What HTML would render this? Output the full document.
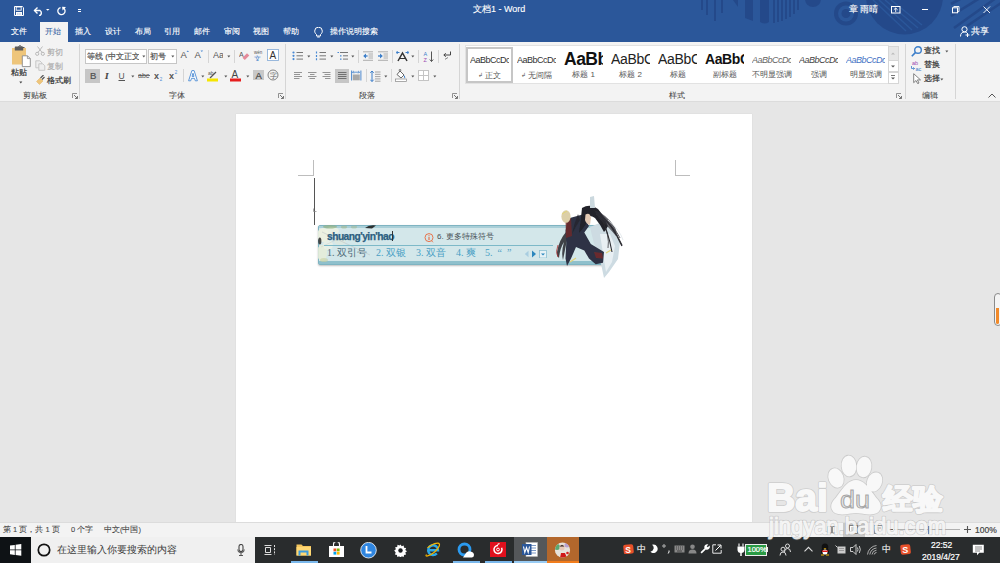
<!DOCTYPE html>
<html><head><meta charset="utf-8">
<style>
*{margin:0;padding:0;box-sizing:border-box}
html,body{width:1000px;height:563px;overflow:hidden;background:#e6e6e6;font-family:"Liberation Sans",sans-serif;position:relative}
.a{position:absolute;white-space:nowrap}
#title{left:0;top:0;width:1000px;height:42px;background:#2b579a;overflow:hidden}
#ribbon{left:0;top:42px;width:1000px;height:59px;background:#f3f3f3}
#rline{left:0;top:101px;width:1000px;height:1px;background:#dcdcdc}
#page{left:236px;top:113.5px;width:516px;height:408.5px;background:#fff;box-shadow:0 0 1px #c8c8c8}
#status{left:0;top:522px;width:1000px;height:15px;background:#f3f3f3;border-top:1px solid #dcdcdc}
#taskbar{left:0;top:537px;width:1000px;height:26px;background:#292c2d}
.tw{color:#fff;font-size:9px;-webkit-text-stroke:0.12px #fff}
.rb{color:#444;font-size:8px}
.sep{width:1px;background:#d6d6d6}
</style></head><body>
<div id="title" class="a">
<svg class="a" style="left:0;top:0" width="1000" height="42">
 <g fill="#24498a">
  <rect x="701" y="0" width="2" height="10"/><rect x="706" y="0" width="2" height="15"/><rect x="714" y="0" width="2" height="21"/><rect x="721" y="0" width="2" height="13"/>
  <polygon points="733,0 738,0 738,7"/>
  <polygon points="745,0 753,0 753,21 745,18"/>
  <path d="M760 0h9v22q-4.5 3 -9 0z"/>
  <rect x="773" y="0" width="2" height="23"/><rect x="777" y="0" width="2" height="22"/><rect x="781" y="0" width="2" height="21"/><rect x="785" y="0" width="2" height="19"/><rect x="789" y="0" width="2" height="17"/><rect x="793" y="0" width="2" height="14"/><rect x="797" y="0" width="2" height="10"/>
  <circle cx="813" cy="-1" r="8"/>
  <circle cx="846" cy="13.5" r="12"/>
 </g>
 <circle cx="846" cy="13.5" r="8" fill="#2b579a"/>
 <circle cx="846" cy="13.5" r="4.5" fill="#24498a"/>
 <path d="M866 -4 A38 38 0 0 0 943 -4 Z" fill="#24498a"/>
 <g stroke="#2b579a" stroke-width="1.4">
  <line x1="873" y1="0" x2="906" y2="31"/><line x1="879" y1="0" x2="912" y2="30"/><line x1="885" y1="0" x2="918" y2="28"/><line x1="891" y1="0" x2="922" y2="25"/>
 </g>
 <g stroke="#24498a" stroke-width="2.6">
  <line x1="951" y1="4" x2="962" y2="-2"/><line x1="951" y1="16" x2="980" y2="-2"/><line x1="954" y1="28" x2="996" y2="-2"/><line x1="967" y1="26" x2="1004" y2="1"/>
 </g>
</svg>
<svg class="a" style="left:14px;top:6px" width="10" height="10" viewBox="0 0 10 10"><path d="M0.5 0.5h7.8l1.2 1.2v7.8h-9z" fill="none" stroke="#fff" stroke-width="1"/><rect x="2.2" y="1" width="5" height="3.2" fill="none" stroke="#fff" stroke-width="0.9"/><rect x="2" y="6" width="6" height="3.5" fill="#fff"/><path d="M3.5 8h0.8M5.6 8h0.8" stroke="#2b579a" stroke-width="0.9"/></svg>
<svg class="a" style="left:33px;top:6px" width="11" height="10" viewBox="0 0 11 10"><path d="M1.5 4.5h5.5a3 3 0 0 1 0 5h-1" fill="none" stroke="#fff" stroke-width="1.4"/><path d="M4.5 1.5l-3 3l3 3" fill="none" stroke="#fff" stroke-width="1.4"/></svg>
<svg class="a" style="left:46px;top:9px" width="4" height="2"><path d="M0 0h3.5l-1.75 1.8z" fill="#fff"/></svg>
<svg class="a" style="left:57px;top:6px" width="10" height="10" viewBox="0 0 10 10"><path d="M3.57 1.52A3.6 3.6 0 1 0 6.6 2.1" fill="none" stroke="#fff" stroke-width="1.3"/><path d="M5.1 0.7L9 0.9L5.6 4.4z" fill="#fff"/></svg>
<div class="a" style="left:78px;top:9px;width:3px;height:1px;background:#fff"></div><div class="a" style="left:78px;top:11px;width:3px;height:1px;background:#fff"></div>
<div class="a tw" style="left:473px;top:4px;font-size:9px;line-height:11px">文档1 - Word</div>
<div class="a tw" style="left:849px;top:4px;font-size:8.5px;line-height:11px">章 雨晴</div>
<svg class="a" style="left:891px;top:6px" width="10" height="8"><rect x="0.5" y="0.5" width="8.5" height="6.5" fill="none" stroke="#fff"/><path d="M4.7 2v4M2.8 3.8l1.9-1.8 1.9 1.8" stroke="#fff" fill="none" stroke-width="0.9"/></svg>
<div class="a" style="left:922px;top:9px;width:6px;height:1px;background:#fff"></div>
<svg class="a" style="left:952px;top:6px" width="8" height="8"><rect x="0.5" y="1.8" width="5" height="5" fill="none" stroke="#fff"/><path d="M1.8 1.5v-1h5.2v5.2h-1" fill="none" stroke="#fff" stroke-width="0.9"/></svg>
<svg class="a" style="left:983px;top:6px" width="8" height="8"><path d="M0.5 0.5l6.5 6.5M7 0.5l-6.5 6.5" stroke="#fff" stroke-width="0.9"/></svg>
<div class="a" style="left:40px;top:22px;width:28px;height:20px;background:#f3f3f3"></div>
<div class="a tw" style="left:11px;top:26px;font-size:8px;line-height:11px">文件</div>
<div class="a" style="left:45px;top:26px;font-size:8px;line-height:11px;color:#2b579a">开始</div>
<div class="a tw" style="left:75px;top:26px;font-size:8px;line-height:11px">插入</div>
<div class="a tw" style="left:105px;top:26px;font-size:8px;line-height:11px">设计</div>
<div class="a tw" style="left:135px;top:26px;font-size:8px;line-height:11px">布局</div>
<div class="a tw" style="left:164px;top:26px;font-size:8px;line-height:11px">引用</div>
<div class="a tw" style="left:194px;top:26px;font-size:8px;line-height:11px">邮件</div>
<div class="a tw" style="left:224px;top:26px;font-size:8px;line-height:11px">审阅</div>
<div class="a tw" style="left:253px;top:26px;font-size:8px;line-height:11px">视图</div>
<div class="a tw" style="left:283px;top:26px;font-size:8px;line-height:11px">帮助</div>
<svg class="a" style="left:314px;top:27px" width="9" height="11" viewBox="0 0 9 11"><path d="M2.5 7.5C1 6.3 0.7 5 0.7 4A3.8 3.8 0 0 1 8.3 4C8.3 5 8 6.3 6.5 7.5V9h-4z" fill="none" stroke="#fff" stroke-width="1"/><path d="M3.2 10h2.6" stroke="#fff"/></svg>
<div class="a tw" style="left:330px;top:26px;font-size:8px;line-height:11px">操作说明搜索</div>
<svg class="a" style="left:960px;top:26px" width="10" height="11" viewBox="0 0 10 11"><circle cx="4.5" cy="3.3" r="2.6" fill="none" stroke="#fff"/><path d="M0.5 10.5c0-3 1.5-4.5 4-4.5 1 0 1.8 0.2 2.3 0.6" fill="none" stroke="#fff"/><path d="M7.5 7v4M5.5 9h4" stroke="#fff"/></svg>
<div class="a tw" style="left:971px;top:26px;font-size:8.5px;line-height:11px">共享</div>
</div>
<div id="ribbon" class="a"></div>
<div id="rline" class="a"></div>
<!--RIB--><svg class="a" style="left:11px;top:45px" width="21" height="23" viewBox="0 0 21 23"><path d="M4.5 3.5h9" stroke="#555" stroke-width="3"/><circle cx="9" cy="2" r="1.3" fill="none" stroke="#555" stroke-width="1"/><rect x="1" y="3" width="14" height="16.5" fill="#eec57a"/><rect x="3.8" y="1.5" width="8.4" height="4" rx="0.5" fill="#5a5a5a"/><path d="M11.3 10.8h5.2l2.8 2.8v8h-8z" fill="#fff" stroke="#8a8a8a" stroke-width="0.9"/><path d="M16.4 10.8v2.8h2.8" fill="none" stroke="#8a8a8a" stroke-width="0.8"/></svg>
<div class="a" style="left:11px;top:67.5px;font-size:8px;line-height:10px;color:#333;-webkit-text-stroke:0.2px #333;">粘贴</div>
<svg class="a" style="left:19px;top:81px" width="4" height="3" viewBox="0 0 4 3"><path d="M0.3 0.6h3l-1.5 1.8z" fill="#444"/></svg>
<svg class="a" style="left:35px;top:46px" width="10" height="10" viewBox="0 0 10 10"><path d="M2.5 0.5l5 6.5M7.5 0.5l-5 6.5" stroke="#b3b3b3" stroke-width="0.9" fill="none"/><circle cx="2.2" cy="7.8" r="1.6" fill="none" stroke="#b3b3b3" stroke-width="0.9"/><circle cx="7.8" cy="7.8" r="1.6" fill="none" stroke="#b3b3b3" stroke-width="0.9"/></svg>
<div class="a" style="left:47px;top:47.5px;font-size:8px;line-height:10px;color:#b0b0b0;-webkit-text-stroke:0.2px #b0b0b0;">剪切</div>
<svg class="a" style="left:35px;top:60px" width="11" height="11" viewBox="0 0 11 11"><path d="M0.8 0.8h4l2 2v5h-6z" fill="#eee" stroke="#c4c4c4" stroke-width="0.9"/><path d="M3.8 3.8h4l2 2v4.5h-6z" fill="#eee" stroke="#c4c4c4" stroke-width="0.9"/></svg>
<div class="a" style="left:47px;top:61.5px;font-size:8px;line-height:10px;color:#b0b0b0;-webkit-text-stroke:0.2px #b0b0b0;">复制</div>
<svg class="a" style="left:36px;top:75px" width="9" height="10" viewBox="0 0 9 10"><path d="M0.5 6.5l3.5 -3.5 3 3-3.5 3.5z" fill="#eec57a" stroke="#e0b060" stroke-width="0.5"/><path d="M4.5 3l3-3M6 4.5l2.5-2.5" stroke="#555" stroke-width="1.2"/></svg>
<div class="a" style="left:47px;top:76px;font-size:8px;line-height:10px;color:#333;-webkit-text-stroke:0.2px #333;">格式刷</div>
<div class="a" style="left:23px;top:91px;font-size:8px;line-height:10px;color:#444;-webkit-text-stroke:0.2px #444;-webkit-text-stroke:0.05px #444">剪贴板</div>
<svg class="a" style="left:72px;top:93px" width="6" height="6" viewBox="0 0 6 6"><path d="M0.5 5V0.5H5" fill="none" stroke="#777" stroke-width="0.8"/><path d="M2 2l3.3 3.3M5.5 3v2.5H3" fill="none" stroke="#666" stroke-width="0.9"/></svg>
<div class="a" style="left:79px;top:44px;width:1px;height:55px;background:#d5d5d5;"></div>
<div class="a" style="left:85px;top:49px;width:62px;height:14.5px;background:#fff;border:1px solid #c6c6c6"></div>
<div class="a" style="left:87px;top:51.5px;font-size:8px;line-height:10px;color:#555;-webkit-text-stroke:0.2px #555;width:52px;overflow:hidden">等线 (中文正文</div>
<svg class="a" style="left:142px;top:55px" width="4" height="3" viewBox="0 0 4 3"><path d="M0.3 0.6h3l-1.5 1.8z" fill="#555"/></svg>
<div class="a" style="left:148px;top:49px;width:28.5px;height:14.5px;background:#fff;border:1px solid #c6c6c6"></div>
<div class="a" style="left:150px;top:51.5px;font-size:8px;line-height:10px;color:#555;-webkit-text-stroke:0.2px #555;">初号</div>
<svg class="a" style="left:171px;top:55px" width="4" height="3" viewBox="0 0 4 3"><path d="M0.3 0.6h3l-1.5 1.8z" fill="#555"/></svg>
<svg class="a" style="left:180px;top:49px" width="9" height="10" viewBox="0 0 9 10"><text x="0.5" y="9" font-size="9.5" font-family="Liberation Sans" fill="#555">A</text><path d="M6.5 3l1.3-1.6 1.3 1.6z" fill="#4a8ad4"/></svg>
<svg class="a" style="left:194px;top:49px" width="10" height="10" viewBox="0 0 10 10"><text x="0.5" y="9" font-size="9.5" font-family="Liberation Sans" fill="#555">A</text><path d="M6.5 1.5h2.6l-1.3 1.6z" fill="#4a8ad4"/></svg>
<div class="a" style="left:208px;top:50px;width:1px;height:13px;background:#d5d5d5;"></div>
<svg class="a" style="left:213px;top:50px" width="10" height="9" viewBox="0 0 10 9"><text x="0" y="8" font-size="9" font-family="Liberation Sans" fill="#555">Aa</text></svg>
<svg class="a" style="left:227px;top:55px" width="4" height="3" viewBox="0 0 4 3"><path d="M0.3 0.6h3l-1.5 1.8z" fill="#555"/></svg>
<div class="a" style="left:234px;top:50px;width:1px;height:13px;background:#d5d5d5;"></div>
<svg class="a" style="left:239px;top:50px" width="11" height="11" viewBox="0 0 11 11"><text x="0" y="7" font-size="7" font-family="Liberation Sans" fill="#555">A</text><path d="M3.5 7.8l4.5-4.5 2.3 2.3-4.5 4.5z" fill="#e58a9a"/></svg>
<svg class="a" style="left:253px;top:50px" width="11" height="11" viewBox="0 0 11 11"><text x="1" y="4" font-size="4.5" font-family="Liberation Sans" fill="#555">wén</text><text x="1.2" y="10.5" font-size="7" fill="#3c7ec9">文</text></svg>
<svg class="a" style="left:267px;top:49px" width="12" height="12" viewBox="0 0 12 12"><rect x="0.5" y="0.5" width="11" height="11" fill="#fff" stroke="#8fb1d9" stroke-width="0.9"/><text x="2.4" y="9.8" font-size="10" font-family="Liberation Sans" fill="#333">A</text></svg>
<div class="a" style="left:85px;top:69px;width:15px;height:14px;background:#c6c6c6;"></div>
<div class="a" style="left:90px;top:70.5px;font-size:9.5px;line-height:10px;color:#505050;-webkit-text-stroke:0.2px #505050;font-family:'Liberation Sans'">B</div>
<div class="a" style="left:105px;top:71px;font-size:9px;line-height:10px;color:#444;-webkit-text-stroke:0.2px #444;font-family:'Liberation Serif'"><i><b>I</b></i></div>
<svg class="a" style="left:118px;top:70px" width="8" height="12" viewBox="0 0 8 12"><text x="0.5" y="8.5" font-size="8.5" font-family="Liberation Sans" fill="#555">U</text><path d="M0.5 10.5h6.5" stroke="#555"/></svg>
<svg class="a" style="left:131px;top:75px" width="4" height="3" viewBox="0 0 4 3"><path d="M0.3 0.6h3l-1.5 1.8z" fill="#555"/></svg>
<svg class="a" style="left:138px;top:71px" width="13" height="9" viewBox="0 0 13 9"><text x="0" y="7" font-size="7" font-family="Liberation Sans" fill="#555">abc</text><path d="M0 4.5h12" stroke="#555" stroke-width="0.8"/></svg>
<svg class="a" style="left:154px;top:70px" width="10" height="12" viewBox="0 0 10 12"><text x="0" y="9" font-size="9" font-family="Liberation Sans" font-weight="bold" fill="#555">x</text><text x="5.8" y="11" font-size="4.5" font-family="Liberation Sans" fill="#4a8ad4">2</text></svg>
<svg class="a" style="left:169px;top:69px" width="10" height="12" viewBox="0 0 10 12"><text x="0" y="10" font-size="9" font-family="Liberation Sans" font-weight="bold" fill="#555">x</text><text x="5.8" y="4.5" font-size="4.5" font-family="Liberation Sans" fill="#4a8ad4">2</text></svg>
<div class="a" style="left:183px;top:69px;width:1px;height:13px;background:#d5d5d5;"></div>
<svg class="a" style="left:188px;top:70px" width="10" height="12" viewBox="0 0 10 12"><path d="M0.6 10.8L3.9 0.6h2.2l3.3 10.2H7.3L6.5 8.3h-3L2.7 10.8zM4 6.4h2L5 3.2z" fill="#fff" fill-rule="evenodd" stroke="#4a8ad4" stroke-width="0.9" stroke-linejoin="round"/></svg>
<svg class="a" style="left:201px;top:75px" width="4" height="3" viewBox="0 0 4 3"><path d="M0.3 0.6h3l-1.5 1.8z" fill="#555"/></svg>
<svg class="a" style="left:207px;top:69px" width="12" height="13" viewBox="0 0 12 13"><text x="1" y="5.5" font-size="5" font-family="Liberation Sans" fill="#555">ab</text><path d="M3 9l6-6" stroke="#555" stroke-width="1.3"/><rect x="0" y="9.5" width="11" height="3" fill="#f5e500"/></svg>
<svg class="a" style="left:224px;top:75px" width="4" height="3" viewBox="0 0 4 3"><path d="M0.3 0.6h3l-1.5 1.8z" fill="#555"/></svg>
<svg class="a" style="left:230px;top:69px" width="12" height="13" viewBox="0 0 12 13"><text x="1.5" y="8.5" font-size="10" font-family="Liberation Sans" fill="#444">A</text><rect x="0" y="9.5" width="11" height="3" fill="#e61e1e"/></svg>
<svg class="a" style="left:246px;top:75px" width="4" height="3" viewBox="0 0 4 3"><path d="M0.3 0.6h3l-1.5 1.8z" fill="#555"/></svg>
<div class="a" style="left:253px;top:70px;width:11px;height:10px;background:#c8c8c8;"></div>
<div class="a" style="left:255.5px;top:71px;font-size:9.5px;line-height:10px;color:#444;-webkit-text-stroke:0.2px #444;font-family:'Liberation Sans'">A</div>
<svg class="a" style="left:267px;top:69px" width="12" height="12" viewBox="0 0 12 12"><circle cx="6" cy="6" r="5" fill="none" stroke="#777" stroke-width="0.9"/><text x="2.5" y="9.3" font-size="7" fill="#666">字</text></svg>
<div class="a" style="left:169px;top:91px;font-size:8px;line-height:10px;color:#444;-webkit-text-stroke:0.2px #444;-webkit-text-stroke:0.05px #444">字体</div>
<svg class="a" style="left:278px;top:93px" width="6" height="6" viewBox="0 0 6 6"><path d="M0.5 5V0.5H5" fill="none" stroke="#777" stroke-width="0.8"/><path d="M2 2l3.3 3.3M5.5 3v2.5H3" fill="none" stroke="#666" stroke-width="0.9"/></svg>
<div class="a" style="left:285px;top:44px;width:1px;height:55px;background:#d5d5d5;"></div>
<svg class="a" style="left:292px;top:51px" width="12" height="10" viewBox="0 0 12 10"><circle cx="1.5" cy="1.5" r="1.1" fill="#4a8ad4"/><circle cx="1.5" cy="4.8" r="1.1" fill="#4a8ad4"/><circle cx="1.5" cy="8.1" r="1.1" fill="#4a8ad4"/><path d="M4.5 1.5h6.5M4.5 4.8h6.5M4.5 8.1h6.5" stroke="#777"/></svg>
<svg class="a" style="left:307px;top:55px" width="4" height="3" viewBox="0 0 4 3"><path d="M0.3 0.6h3l-1.5 1.8z" fill="#555"/></svg>
<svg class="a" style="left:315px;top:51px" width="12" height="10" viewBox="0 0 12 10"><path d="M1.5 0.5v2M1.5 4v2M1.5 7.3v2" stroke="#4a8ad4" stroke-width="1.2"/><path d="M4.5 1.5h6.5M4.5 4.8h6.5M4.5 8.1h6.5" stroke="#777"/></svg>
<svg class="a" style="left:330px;top:55px" width="4" height="3" viewBox="0 0 4 3"><path d="M0.3 0.6h3l-1.5 1.8z" fill="#555"/></svg>
<svg class="a" style="left:337px;top:51px" width="12" height="11" viewBox="0 0 12 11"><path d="M0.5 1.5h1.5M3 4.8h1.5M3 8.1h1.5" stroke="#4a8ad4" stroke-width="1.2"/><path d="M3 1.5h8M6 4.8h5M6 8.1h5" stroke="#777"/></svg>
<svg class="a" style="left:351px;top:55px" width="4" height="3" viewBox="0 0 4 3"><path d="M0.3 0.6h3l-1.5 1.8z" fill="#555"/></svg>
<div class="a" style="left:358px;top:50px;width:1px;height:13px;background:#d5d5d5;"></div>
<svg class="a" style="left:363px;top:51px" width="11" height="11" viewBox="0 0 11 11"><path d="M0 0.8h10M5.5 3h4.5M5.5 5h4.5M5.5 7h4.5M0 9.3h10" stroke="#9a9a9a" stroke-width="0.8"/><path d="M4.6 5h-3.6" stroke="#3c7ec9" stroke-width="1.3"/><path d="M3 2.5L0.2 5 3 7.5z" fill="#3c7ec9"/></svg>
<svg class="a" style="left:378px;top:51px" width="11" height="11" viewBox="0 0 11 11"><path d="M0 0.8h10M5.5 3h4.5M5.5 5h4.5M5.5 7h4.5M0 9.3h10" stroke="#9a9a9a" stroke-width="0.8"/><path d="M0 5h3.6" stroke="#3c7ec9" stroke-width="1.3"/><path d="M2 2.5L4.8 5 2 7.5z" fill="#3c7ec9"/></svg>
<div class="a" style="left:392px;top:50px;width:1px;height:13px;background:#d5d5d5;"></div>
<svg class="a" style="left:396px;top:50px" width="13" height="12" viewBox="0 0 13 12"><path d="M2 11L6.5 3 11 11" stroke="#333" stroke-width="1.5" fill="none"/><path d="M3.5 8.5h6" stroke="#333"/><path d="M0.5 2.5h3M1.5 1l-1 1.5 1 1.5M12.5 2.5h-3M11.5 1l1 1.5-1 1.5" stroke="#3c7ec9" stroke-width="1" fill="none"/></svg>
<svg class="a" style="left:411px;top:55px" width="4" height="3" viewBox="0 0 4 3"><path d="M0.3 0.6h3l-1.5 1.8z" fill="#555"/></svg>
<div class="a" style="left:418px;top:50px;width:1px;height:13px;background:#d5d5d5;"></div>
<svg class="a" style="left:423px;top:51px" width="12" height="12" viewBox="0 0 12 12"><text x="0.5" y="5" font-size="5.5" font-family="Liberation Sans" fill="#3c7ec9">A</text><text x="0.5" y="10.5" font-size="5.5" font-family="Liberation Sans" fill="#9b4bb0">Z</text><path d="M8.5 0.5v10M6.8 8.5l1.7 2 1.7-2" stroke="#555" fill="none"/></svg>
<div class="a" style="left:438px;top:50px;width:1px;height:13px;background:#d5d5d5;"></div>
<svg class="a" style="left:442px;top:51px" width="10" height="9" viewBox="0 0 10 9"><path d="M8.5 0.5v3.5h-6.5M3.8 2.3L1.8 4 3.8 5.7" stroke="#444" stroke-width="1" fill="none"/><path d="M6 6.5l-3 1.8" stroke="#666" stroke-width="0.8"/></svg>
<svg class="a" style="left:294px;top:72px" width="10" height="8" viewBox="0 0 10 8"><path d="M0 0.5h8M0 2.5h6M0 4.5h8M0 6.5h5.5" stroke="#8a8a8a" stroke-width="0.9"/></svg>
<svg class="a" style="left:308px;top:72px" width="10" height="8" viewBox="0 0 10 8"><path d="M0 0.5h8.5M2 2.5h4.5M0 4.5h8.5M1.5 6.5h5.5" stroke="#8a8a8a" stroke-width="0.9"/></svg>
<svg class="a" style="left:322px;top:72px" width="10" height="8" viewBox="0 0 10 8"><path d="M0.5 0.5h8M2.5 2.5h6M0.5 4.5h8M3 6.5h5.5" stroke="#8a8a8a" stroke-width="0.9"/></svg>
<div class="a" style="left:334.5px;top:69px;width:14.5px;height:14px;background:#c6c6c6;"></div>
<svg class="a" style="left:337.5px;top:71.5px" width="10" height="8" viewBox="0 0 10 8"><path d="M0 0.5h8.5M0 2.5h8.5M0 4.5h8.5M0 6.5h8.5" stroke="#666" stroke-width="0.9"/></svg>
<svg class="a" style="left:351px;top:70px" width="11" height="11" viewBox="0 0 11 11"><path d="M0.6 0.5v10M9.9 0.5v10" stroke="#3c7ec9" stroke-width="0.9"/><path d="M1.5 2.2h7M2.8 1l-1.2 1.2 1.2 1.2M7.2 1l1.2 1.2-1.2 1.2" stroke="#3c7ec9" fill="none" stroke-width="0.8"/><rect x="1.8" y="4.5" width="7" height="5.8" fill="#a8a8a8"/></svg>
<div class="a" style="left:366px;top:69px;width:1px;height:13px;background:#d5d5d5;"></div>
<svg class="a" style="left:370px;top:70px" width="12" height="13" viewBox="0 0 12 13"><path d="M2 1v10.5M0.3 2.8L2 1l1.7 1.8M0.3 9.7L2 11.5l1.7-1.8" stroke="#3c7ec9" fill="none" stroke-width="1"/><path d="M5 2h5.5M5 4.3h5.5M5 6.6h5.5M5 8.9h5.5M5 11.2h5.5" stroke="#9a9a9a" stroke-width="0.9"/></svg>
<svg class="a" style="left:384px;top:75px" width="4" height="3" viewBox="0 0 4 3"><path d="M0.3 0.6h3l-1.5 1.8z" fill="#555"/></svg>
<div class="a" style="left:391px;top:69px;width:1px;height:13px;background:#d5d5d5;"></div>
<svg class="a" style="left:395px;top:69px" width="12" height="13" viewBox="0 0 12 13"><path d="M2 5.5l3-3.5 4 4-3 3z" fill="#fff" stroke="#555" stroke-width="0.9"/><circle cx="5" cy="1.2" r="0.9" fill="none" stroke="#555" stroke-width="0.7"/><path d="M9 6.5q1.5 2 0.3 2.7" stroke="#3c7ec9" fill="none"/><rect x="0.5" y="10" width="11" height="2.5" fill="#fff" stroke="#888" stroke-width="0.7"/></svg>
<svg class="a" style="left:411px;top:75px" width="4" height="3" viewBox="0 0 4 3"><path d="M0.3 0.6h3l-1.5 1.8z" fill="#555"/></svg>
<svg class="a" style="left:418px;top:70px" width="11" height="11" viewBox="0 0 11 11"><rect x="0.5" y="0.5" width="10" height="10" fill="#fff" stroke="#c4c4c4"/><path d="M5.5 0.5v10M0.5 5.5h10" stroke="#c4c4c4"/></svg>
<svg class="a" style="left:433px;top:75px" width="4" height="3" viewBox="0 0 4 3"><path d="M0.3 0.6h3l-1.5 1.8z" fill="#555"/></svg>
<div class="a" style="left:359px;top:91px;font-size:8px;line-height:10px;color:#444;-webkit-text-stroke:0.2px #444;-webkit-text-stroke:0.05px #444">段落</div>
<svg class="a" style="left:452px;top:93px" width="6" height="6" viewBox="0 0 6 6"><path d="M0.5 5V0.5H5" fill="none" stroke="#777" stroke-width="0.8"/><path d="M2 2l3.3 3.3M5.5 3v2.5H3" fill="none" stroke="#666" stroke-width="0.9"/></svg>
<div class="a" style="left:459px;top:44px;width:1px;height:55px;background:#d5d5d5;"></div>
<div class="a" style="left:465px;top:45px;width:424px;height:39px;background:#fff;border:1px solid #e2e2e2"></div>
<div class="a" style="left:466px;top:47px;width:46.5px;height:36px;background:transparent;border:2.5px solid #c6c6c6"></div>
<div class="a" style="left:470px;top:50px;width:39px;height:20px;overflow:hidden"><div style="line-height:20px;font-family:'Liberation Sans';font-size:9px;color:#333;letter-spacing:-0.5px">AaBbCcDc</div></div>
<div class="a" style="left:466px;top:70px;width:47px;text-align:center;font-size:8px;line-height:10px;color:#555"><span style="font-size:6px;vertical-align:1px">↲ </span>正文</div>
<div class="a" style="left:517px;top:50px;width:39px;height:20px;overflow:hidden"><div style="line-height:20px;font-family:'Liberation Sans';font-size:9px;color:#333;letter-spacing:-0.5px">AaBbCcDc</div></div>
<div class="a" style="left:513px;top:70px;width:47px;text-align:center;font-size:8px;line-height:10px;color:#555"><span style="font-size:6px;vertical-align:1px">↲ </span>无间隔</div>
<div class="a" style="left:564px;top:49px;width:39px;height:20px;overflow:hidden"><div style="line-height:20px;font-family:'Liberation Sans';font-size:17.5px;color:#111;font-weight:bold;letter-spacing:-0.5px">AaBbC</div></div>
<div class="a" style="left:560px;top:70px;width:47px;text-align:center;font-size:8px;line-height:10px;color:#555">标题 1</div>
<div class="a" style="left:611px;top:49px;width:39px;height:20px;overflow:hidden"><div style="line-height:20px;font-family:'Liberation Sans';font-size:14px;color:#222;letter-spacing:-0.3px">AaBbCc</div></div>
<div class="a" style="left:607px;top:70px;width:47px;text-align:center;font-size:8px;line-height:10px;color:#555">标题 2</div>
<div class="a" style="left:658px;top:49px;width:39px;height:20px;overflow:hidden"><div style="line-height:20px;font-family:'Liberation Sans';font-size:14px;color:#222;letter-spacing:-0.3px">AaBbCc</div></div>
<div class="a" style="left:654px;top:70px;width:47px;text-align:center;font-size:8px;line-height:10px;color:#555">标题</div>
<div class="a" style="left:705px;top:49px;width:39px;height:20px;overflow:hidden"><div style="line-height:20px;font-family:'Liberation Sans';font-size:14px;color:#111;font-weight:bold;letter-spacing:-0.4px">AaBbCc</div></div>
<div class="a" style="left:701px;top:70px;width:47px;text-align:center;font-size:8px;line-height:10px;color:#555">副标题</div>
<div class="a" style="left:752px;top:50px;width:39px;height:20px;overflow:hidden"><div style="line-height:20px;font-family:'Liberation Sans';font-size:9px;color:#666;font-style:italic;letter-spacing:-0.5px">AaBbCcDc</div></div>
<div class="a" style="left:748px;top:70px;width:47px;text-align:center;font-size:8px;line-height:10px;color:#555">不明显强调</div>
<div class="a" style="left:799px;top:50px;width:39px;height:20px;overflow:hidden"><div style="line-height:20px;font-family:'Liberation Sans';font-size:9px;color:#444;font-style:italic;letter-spacing:-0.5px">AaBbCcDc</div></div>
<div class="a" style="left:795px;top:70px;width:47px;text-align:center;font-size:8px;line-height:10px;color:#555">强调</div>
<div class="a" style="left:846px;top:50px;width:39px;height:20px;overflow:hidden"><div style="line-height:20px;font-family:'Liberation Sans';font-size:9px;color:#4472c4;font-style:italic;letter-spacing:-0.5px">AaBbCcDc</div></div>
<div class="a" style="left:842px;top:70px;width:47px;text-align:center;font-size:8px;line-height:10px;color:#555">明显强调</div>
<div class="a" style="left:888px;top:45.5px;width:10.5px;height:15px;background:#e6e6e6;border:1px solid #d6d6d6"></div>
<div class="a" style="left:888px;top:60px;width:10.5px;height:12px;background:#fff;border:1px solid #d6d6d6"></div>
<div class="a" style="left:888px;top:71.5px;width:10.5px;height:12.5px;background:#fff;border:1px solid #d6d6d6"></div>
<svg class="a" style="left:891px;top:52px" width="5" height="3" viewBox="0 0 5 3"><path d="M0 2.5h4l-2-2z" fill="#bbb"/></svg>
<svg class="a" style="left:891px;top:65px" width="5" height="3" viewBox="0 0 5 3"><path d="M0 0.5h4l-2 2z" fill="#555"/></svg>
<svg class="a" style="left:891px;top:75px" width="5" height="6" viewBox="0 0 5 6"><path d="M0 0.5h4" stroke="#555" stroke-width="0.8"/><path d="M0 2.5h4l-2 2z" fill="#555"/></svg>
<div class="a" style="left:669px;top:91px;font-size:8px;line-height:10px;color:#444;-webkit-text-stroke:0.2px #444;-webkit-text-stroke:0.05px #444">样式</div>
<svg class="a" style="left:896px;top:93px" width="6" height="6" viewBox="0 0 6 6"><path d="M0.5 5V0.5H5" fill="none" stroke="#777" stroke-width="0.8"/><path d="M2 2l3.3 3.3M5.5 3v2.5H3" fill="none" stroke="#666" stroke-width="0.9"/></svg>
<div class="a" style="left:905px;top:44px;width:1px;height:55px;background:#d5d5d5;"></div>
<svg class="a" style="left:911px;top:46px" width="12" height="11" viewBox="0 0 12 11"><circle cx="7" cy="4" r="3.3" fill="none" stroke="#3c7ec9" stroke-width="1.4"/><path d="M4.6 6.4l-3.8 3.8" stroke="#3c7ec9" stroke-width="1.6"/></svg>
<div class="a" style="left:924px;top:46px;font-size:8px;line-height:10px;color:#333;-webkit-text-stroke:0.2px #333;">查找</div>
<svg class="a" style="left:945px;top:50px" width="4" height="3" viewBox="0 0 4 3"><path d="M0.3 0.6h3l-1.5 1.8z" fill="#555"/></svg>
<svg class="a" style="left:911px;top:60px" width="12" height="11" viewBox="0 0 12 11"><text x="1" y="5" font-size="5.5" font-family="Liberation Sans" fill="#9b4bb0">ab</text><text x="4.5" y="10.5" font-size="5.5" font-family="Liberation Sans" fill="#3c7ec9">ac</text><path d="M0.5 6v2.5h3M2.3 7.3l1.2 1.2-1.2 1.2" stroke="#3c7ec9" fill="none" stroke-width="0.8"/></svg>
<div class="a" style="left:924px;top:60px;font-size:8px;line-height:10px;color:#333;-webkit-text-stroke:0.2px #333;">替换</div>
<svg class="a" style="left:913px;top:73px" width="8" height="11" viewBox="0 0 8 11"><path d="M0.7 0.7v9l2.3-2.2 1.7 3.2 1.3-0.7-1.6-3.1h3.1z" fill="#fff" stroke="#666" stroke-width="0.8"/></svg>
<div class="a" style="left:924px;top:74px;font-size:8px;line-height:10px;color:#333;-webkit-text-stroke:0.2px #333;">选择</div>
<svg class="a" style="left:940px;top:78px" width="4" height="3" viewBox="0 0 4 3"><path d="M0.3 0.6h3l-1.5 1.8z" fill="#555"/></svg>
<div class="a" style="left:922px;top:91px;font-size:8px;line-height:10px;color:#444;-webkit-text-stroke:0.2px #444;-webkit-text-stroke:0.05px #444">编辑</div>
<div class="a" style="left:955px;top:44px;width:1px;height:55px;background:#d5d5d5;"></div>
<svg class="a" style="left:988px;top:93px" width="8" height="5" viewBox="0 0 8 5"><path d="M0.5 4.5l3.5-3.5 3.5 3.5" fill="none" stroke="#555" stroke-width="1"/></svg>
<!--/RIB-->
<div id="page" class="a"></div>
<div id="status" class="a"></div>
<div id="taskbar" class="a"></div>
<!--IME--><div class="a" style="left:318px;top:225px;width:290px;height:39.5px;background:#d3e7ea;border:1px solid #7fb4c2;border-radius:2px;box-shadow:0 1px 2px rgba(0,0,0,0.25)"></div>
<div class="a" style="left:319px;top:226px;width:288px;height:2px;background:#a9cfd8;"></div>
<div class="a" style="left:319px;top:260.5px;width:288px;height:3px;background:#8fc0cc;"></div>
<svg class="a" style="left:318px;top:225px" width="60" height="40" viewBox="0 0 60 40">
<defs><filter id="bl"><feGaussianBlur stdDeviation="0.6"/></filter></defs>
<g filter="url(#bl)">
<ellipse cx="5" cy="10" rx="6" ry="7" fill="#eef2e0" opacity="0.9"/>
<ellipse cx="4" cy="28" rx="5" ry="8" fill="#e8eed8" opacity="0.85"/>
<ellipse cx="14" cy="6" rx="7" ry="4" fill="#eef2e2" opacity="0.8"/>
<ellipse cx="22" cy="16" rx="6" ry="4" fill="#e2eadc" opacity="0.6"/>
<ellipse cx="10" cy="20" rx="5" ry="5" fill="#f0f2e6" opacity="0.7"/>
<path d="M4 7 L52 30" stroke="#b4babb" stroke-width="1" opacity="0.45"/>
<path d="M3 22 L20 14" stroke="#b8bcbc" stroke-width="0.8" opacity="0.35"/>
<path d="M10 30 L42 31" stroke="#c8ccc0" stroke-width="0.7" opacity="0.4"/>
<ellipse cx="1.8" cy="16" rx="1.6" ry="3.5" fill="#2a2a2a" opacity="0.85"/>
<ellipse cx="12" cy="1.8" rx="7" ry="1.8" fill="#90b080" opacity="0.7"/>
<ellipse cx="26" cy="2" rx="3" ry="1.5" fill="#a0b890" opacity="0.6"/>
<ellipse cx="36" cy="2" rx="3" ry="1.5" fill="#a0b890" opacity="0.5"/>
<ellipse cx="6" cy="35" rx="4" ry="2" fill="#c8d0a0" opacity="0.6"/>
</g>
<path d="M47 3 Q51 -0.5 58 0.5 L54 3.5z" fill="#1e1e1e" opacity="0.9"/>
</svg>
<div class="a" style="left:324px;top:245px;width:229px;height:1.2px;background:#7db9c8;"></div>
<div class="a" style="left:327px;top:229.5px;font-size:10.2px;line-height:13px;font-weight:bold;color:#2b5e80;letter-spacing:-0.5px;-webkit-text-stroke:0.25px #2b5e80;font-family:'Liberation Sans'">shuang'yin'hao</div>
<div class="a" style="left:392px;top:231px;width:1px;height:10px;background:#333;"></div>
<svg class="a" style="left:424px;top:233px" width="10" height="10" viewBox="0 0 10 10"><circle cx="5" cy="4.6" r="4" fill="none" stroke="#e8734a" stroke-width="1"/><path d="M5 3.8v3.2" stroke="#e8734a" stroke-width="1.2"/><circle cx="5" cy="2.5" r="0.6" fill="#e8734a"/><path d="M7.5 7.5l1.5 1.8" stroke="#e8734a" stroke-width="0.8"/></svg>
<div class="a" style="left:437px;top:232px;font-size:8px;line-height:10px;color:#4a5258;-webkit-text-stroke:0.2px #4a5258;line-height:10px;-webkit-text-stroke:0px">6. 更多特殊符号</div>
<div class="a" style="left:327px;top:247px;font-size:10px;line-height:12px;font-family:'Liberation Serif';color:#4d6b7a">1. 双引号</div>
<div class="a" style="left:376px;top:247px;font-size:10px;line-height:12px;font-family:'Liberation Serif';color:#4a9fc4">2. 双银</div>
<div class="a" style="left:416px;top:247px;font-size:10px;line-height:12px;font-family:'Liberation Serif';color:#4a9fc4">3. 双音</div>
<div class="a" style="left:456px;top:247px;font-size:10px;line-height:12px;font-family:'Liberation Serif';color:#4a9fc4">4. 爽</div>
<div class="a" style="left:485px;top:247px;font-size:10px;line-height:12px;font-family:'Liberation Serif';color:#4a9fc4">5. &nbsp;“ &nbsp;”</div>
<svg class="a" style="left:524px;top:250px" width="14" height="8" viewBox="0 0 14 8"><path d="M4.5 0.8v6.4L0.8 4z" fill="#a8cde0"/><path d="M8 0.5v7l4-3.5z" fill="#2a86bd"/></svg>
<svg class="a" style="left:539px;top:249.5px" width="8" height="8.5" viewBox="0 0 8 8.5"><rect x="0.5" y="0.5" width="7" height="7.5" fill="#e6f2f6" stroke="#8cc0d4" stroke-width="0.8"/><path d="M2 3.5h4l-2 2z" fill="#2a86bd"/></svg>
<svg class="a" style="left:550px;top:190px" width="80" height="92" viewBox="0 0 80 92">
<defs><filter id="fb"><feGaussianBlur stdDeviation="0.45"/></filter></defs>
<g filter="url(#fb)">
<path d="M16 42 Q9 50 7 62 Q6 66 9 68 Q10 58 14 52 Q11 62 13 70 Q15 60 17 50z" fill="#26262c" opacity="0.85"/>
<path d="M40 37 L52 32 L63 41 L70 52 L68 69 L59 82 L54 88 L52 78.4 L49 65.3 L44 54z" fill="#cddbe2"/>
<path d="M50 44 L60 44 L65 56 L62 72 L56 82 L54 70z" fill="#e8eff3"/>
<path d="M18 28.6 L32.7 24.5 L39 36 L34.3 42.4 L40.8 54 L54 62 L53 72.7 L45.7 74.3 L39 68.6 L34.3 60.4 L26 57 L21 68.6 L17 76 L15.5 68.6 L16.3 52 L15.5 40.8z" fill="#2d3344"/>
<path d="M15.5 29 L21 28 L22 46 L16 48z" fill="#6e2a2a" opacity="0.85"/>
<path d="M44 62 L52 63 L53 68.6 L46 68z" fill="#7a2a2a" opacity="0.8"/>
<ellipse cx="16" cy="26.5" rx="4.6" ry="6.3" fill="#dccfa8"/>
<path d="M32 18 Q40 13 48 19 Q54 26 58 36 Q56 40 54 42 Q50 34 45 28 Q42 26 40 26 L36 34 Q32 40 29 43 Q31 30 32 18z" fill="#222229"/>
<path d="M48 22 Q62 34 72 56" stroke="#2a2a30" stroke-width="1.3" fill="none"/>
<path d="M50 26 Q58 40 62 62" stroke="#2a2a30" stroke-width="1.1" fill="none"/>
<path d="M46 24 Q66 38 70 48" stroke="#33333a" stroke-width="0.8" fill="none"/>
<path d="M44 20 Q56 24 64 36 Q68 42 66 46 Q58 36 50 30z" fill="#2e2e36" opacity="0.75"/>
<path d="M28 24 Q24 34 22 44 Q26 36 30 30z" fill="#26262c" opacity="0.8"/>
<path d="M52 30 Q60 46 58 58" stroke="#2a2a30" stroke-width="0.9" fill="none" opacity="0.8"/>
<path d="M35.5 24.5 Q40 22 41 28 L40 35 Q36 34 35 30z" fill="#e3c9b4"/>
<path d="M40 7 L44 6 L45 18 L40 18z" fill="#cbd8de"/>
<path d="M47 23 Q62 32 72 55" stroke="#2a2a30" stroke-width="0.9" fill="none"/>
<path d="M58 30 Q70 40 73 50" stroke="#e0e6ea" stroke-width="0.8" fill="none"/>
<path d="M20 72 L26 68" stroke="#e2d47a" stroke-width="1.4"/>
<path d="M56 63 L61 60" stroke="#e2d47a" stroke-width="1.1"/>
<path d="M12 24 L17 21" stroke="#e2d47a" stroke-width="1"/>
<path d="M8 55 Q5 62 8 67" stroke="#b03030" stroke-width="0.8" fill="none"/>
</g>
</svg>
<!--/IME-->
<!--BOT--><div class="a" style="left:298px;top:175px;width:16px;height:1px;background:#bdbdbd;"></div>
<div class="a" style="left:313px;top:160px;width:1px;height:16px;background:#bdbdbd;"></div>
<div class="a" style="left:675px;top:175px;width:15px;height:1px;background:#bdbdbd;"></div>
<div class="a" style="left:675px;top:160px;width:1px;height:16px;background:#bdbdbd;"></div>
<div class="a" style="left:314px;top:178px;width:1px;height:47px;background:#555;"></div>
<svg class="a" style="left:312px;top:208px" width="6" height="5" viewBox="0 0 6 5"><path d="M1.5 0.5v3h3" fill="none" stroke="#888" stroke-width="0.7"/></svg>
<div class="a" style="left:994px;top:292.5px;width:8px;height:33px;background:#f4f4f4;border:1.2px solid #8a8a8a;border-radius:4px"></div>
<div class="a" style="left:995.8px;top:308px;width:3px;height:16px;background:#f28a2a;border-radius:0 0 1.5px 1.5px"></div>
<div class="a" style="left:3px;top:525px;font-size:7.5px;line-height:10px;color:#444;-webkit-text-stroke:0.2px #444;-webkit-text-stroke:0.08px #444">第 1 页，共 1 页</div>
<div class="a" style="left:71px;top:525px;font-size:7.5px;line-height:10px;color:#444;-webkit-text-stroke:0.2px #444;-webkit-text-stroke:0.08px #444">0 个字</div>
<div class="a" style="left:104px;top:525px;font-size:7.5px;line-height:10px;color:#444;-webkit-text-stroke:0.2px #444;-webkit-text-stroke:0.08px #444">中文(中国)</div>
<svg class="a" style="left:827px;top:525px" width="10" height="9" viewBox="0 0 10 9"><path d="M0.5 1.5h4v6.5h-4zM5.5 1.5h4v6.5h-4z" fill="none" stroke="#777" stroke-width="0.8"/></svg>
<div class="a" style="left:843px;top:522.5px;width:22px;height:14px;background:#c8c8c8;"></div>
<svg class="a" style="left:849px;top:525px" width="10" height="9" viewBox="0 0 10 9"><rect x="0.5" y="0.5" width="8" height="8" fill="#fff" stroke="#666" stroke-width="0.8"/><path d="M2 3h5M2 5h5" stroke="#888" stroke-width="0.7"/></svg>
<svg class="a" style="left:874px;top:525px" width="10" height="9" viewBox="0 0 10 9"><rect x="0.5" y="0.5" width="8" height="8" fill="none" stroke="#777" stroke-width="0.8"/><path d="M2 3h5M2 5h3" stroke="#888" stroke-width="0.7"/></svg>
<div class="a" style="left:889px;top:529px;width:4px;height:1px;background:#666;"></div>
<div class="a" style="left:894px;top:529px;width:66px;height:1px;background:#b0b0b0;"></div>
<div class="a" style="left:927.5px;top:525.5px;width:2.5px;height:8px;background:#555;"></div>
<svg class="a" style="left:964px;top:526px" width="7" height="7" viewBox="0 0 7 7"><path d="M3.5 0v7M0 3.5h7" stroke="#555" stroke-width="1.1"/></svg>
<div class="a" style="left:975px;top:525px;font-size:8.5px;line-height:10px;color:#444;-webkit-text-stroke:0.2px #444;font-family:'Liberation Sans'">100%</div>
<div class="a" style="left:31px;top:537px;width:969px;height:26px;background:#292c2d;"></div>
<div class="a" style="left:0px;top:537px;width:31px;height:26px;background:#0e1215;"></div>
<svg class="a" style="left:10px;top:544px" width="12" height="12" viewBox="0 0 12 12"><path d="M0 1.6L4.8 0.9V5.5H0zM5.6 0.8L11.3 0V5.5H5.6zM0 6.3H4.8V10.9L0 10.2zM5.6 6.3H11.3V11.8L5.6 11z" fill="#fff"/></svg>
<div class="a" style="left:31px;top:537px;width:224px;height:26px;background:#f0f0f0;"></div>
<svg class="a" style="left:37px;top:543px" width="14" height="14" viewBox="0 0 14 14"><circle cx="7" cy="7" r="5.7" fill="none" stroke="#111" stroke-width="1.7"/></svg>
<div class="a" style="left:57px;top:544px;font-size:9.5px;line-height:10px;color:#3a3a3a;-webkit-text-stroke:0.2px #3a3a3a;line-height:12px;-webkit-text-stroke:0px">在这里输入你要搜索的内容</div>
<svg class="a" style="left:237px;top:544px" width="8" height="12" viewBox="0 0 8 12"><rect x="2" y="0.5" width="4" height="7" rx="2" fill="none" stroke="#444" stroke-width="1.1"/><path d="M0.7 5.5a3.3 3.3 0 0 0 6.6 0M4 9v2.5M2 11.5h4" fill="none" stroke="#444" stroke-width="0.9"/></svg>
<svg class="a" style="left:264px;top:545px" width="13" height="11" viewBox="0 0 13 11"><path d="M0.5 0.5h7M0.5 9.5h7M1.5 2.5h5v5h-5z" fill="none" stroke="#ddd" stroke-width="1"/><path d="M10.5 0v10" stroke="#ddd" stroke-width="1" stroke-dasharray="2 1.2"/></svg>
<svg class="a" style="left:296px;top:543px" width="16" height="13" viewBox="0 0 16 13"><path d="M0.5 1.5h5l1.5 1.5h8v9.5h-14.5z" fill="#f4c55d"/><rect x="0.5" y="4" width="14.5" height="8.5" fill="#ffd873"/><path d="M3.5 12.5v-4h8v4" fill="none" stroke="#3b9ade" stroke-width="2"/></svg>
<div class="a" style="left:291px;top:561px;width:27px;height:2px;background:#7ab8ec;"></div>
<svg class="a" style="left:328px;top:542px" width="17" height="15" viewBox="0 0 17 15"><path d="M5.5 4V2.5a3 3 0 0 1 6 0V4" fill="none" stroke="#fff" stroke-width="1.1"/><rect x="1" y="4" width="15" height="11" fill="#fff"/><rect x="5.5" y="6.5" width="2.8" height="2.8" fill="#f25022"/><rect x="8.8" y="6.5" width="2.8" height="2.8" fill="#7fba00"/><rect x="5.5" y="9.8" width="2.8" height="2.8" fill="#00a4ef"/><rect x="8.8" y="9.8" width="2.8" height="2.8" fill="#ffb900"/></svg>
<svg class="a" style="left:360px;top:542px" width="17" height="17" viewBox="0 0 17 17"><circle cx="8.5" cy="8.2" r="7.8" fill="#2f86e0" stroke="#fff" stroke-width="0.8"/><path d="M6.5 4v6.5h5" fill="none" stroke="#fff" stroke-width="1.8"/></svg>
<svg class="a" style="left:394px;top:544px" width="13" height="13" viewBox="0 0 13 13"><path d="M6.5 0.5l1.2 1.8 2-0.7 0.3 2.1 2.1 0.4-0.8 2 1.7 1.2-1.7 1.2 0.8 2-2.1 0.4-0.3 2.1-2-0.7-1.2 1.8-1.2-1.8-2 0.7-0.3-2.1-2.1-0.4 0.8-2L0.2 6.5l1.7-1.2-0.8-2 2.1-0.4 0.3-2.1 2 0.7z" fill="#fff"/><circle cx="6.5" cy="6.5" r="2.2" fill="#1c1f22"/></svg>
<svg class="a" style="left:425px;top:542px" width="17" height="15" viewBox="0 0 17 15"><path d="M3.6 8.2h9.4A4.9 4.9 0 1 0 11.8 11.4" fill="none" stroke="#2aa9e9" stroke-width="2.4"/><path d="M1.5 12.5C-0.5 15 4 14.5 9 10.5S16.5 1 12.5 1.2 4 4 2.5 6" fill="none" stroke="#f4b400" stroke-width="1.2"/></svg>
<svg class="a" style="left:457px;top:542px" width="18" height="16" viewBox="0 0 18 16"><circle cx="7.5" cy="7.5" r="5.5" fill="none" stroke="#2b9bf0" stroke-width="2.8"/><path d="M8 12.5q2-4 5.5-3 3.5 0.5 3.5 3.5 0 2-2 2.5h-9z" fill="#fff"/></svg>
<div class="a" style="left:453px;top:561px;width:27px;height:2px;background:#7ab8ec;"></div>
<div class="a" style="left:489.5px;top:542px;width:16.5px;height:15px;background:#e0101d;"></div>
<svg class="a" style="left:492px;top:543px" width="12" height="13" viewBox="0 0 12 13"><path d="M6 2.5a4 4 0 1 0 3.6 2.3" fill="none" stroke="#fff" stroke-width="1.5"/><circle cx="6" cy="6.5" r="1.4" fill="none" stroke="#fff" stroke-width="1"/><path d="M5.5 1.5l2-1" stroke="#fff" stroke-width="1.2"/></svg>
<div class="a" style="left:485px;top:561px;width:27px;height:2px;background:#7ab8ec;"></div>
<div class="a" style="left:514px;top:537px;width:33px;height:26px;background:#54575a;"></div>
<svg class="a" style="left:522px;top:542px" width="16" height="15" viewBox="0 0 16 15"><rect x="4" y="0.5" width="11.5" height="14" fill="#fff" stroke="#bbb" stroke-width="0.6"/><path d="M9 3.5h5M9 6h5M9 8.5h5M9 11h5" stroke="#5a7fb8" stroke-width="0.8"/><rect x="0" y="2" width="9.5" height="11" fill="#2b579a"/><path d="M1.5 4.5l1.3 6 1.7-5 1.7 5 1.3-6" fill="none" stroke="#fff" stroke-width="1.1"/></svg>
<div class="a" style="left:514px;top:561px;width:33px;height:2px;background:#99ccf4;"></div>
<div class="a" style="left:547px;top:537px;width:32px;height:26px;background:#b3672c;"></div>
<svg class="a" style="left:554px;top:542px" width="17" height="16" viewBox="0 0 17 16"><defs><clipPath id="av"><circle cx="8.5" cy="8" r="7.6"/></clipPath></defs><g clip-path="url(#av)"><rect width="17" height="16" fill="#e6e2dc"/><circle cx="3" cy="5" r="3" fill="#5aa870"/><circle cx="13" cy="3" r="2.5" fill="#b8a0d0"/><ellipse cx="8" cy="5.5" rx="2.6" ry="3" fill="#e8c8b8"/><path d="M5.5 4.5q2.5-3 5 0" fill="#2a2020"/><path d="M6 16l1-5h4l2 5z" fill="#d01818"/><circle cx="13.5" cy="11" r="1.3" fill="#d02020"/></g></svg>
<div class="a" style="left:547px;top:561px;width:32px;height:2px;background:#f27d1c;"></div>
<svg class="a" style="left:623px;top:544px" width="11" height="10" viewBox="0 0 11 10"><rect x="0.5" y="0.5" width="10" height="9.5" rx="2" fill="#e8512a" transform="rotate(-6 5 5)"/><text x="2.3" y="8.5" font-size="8.5" font-weight="bold" font-family="Liberation Sans" fill="#fff">S</text></svg>
<div class="a" style="left:637px;top:543px;font-size:9px;line-height:10px;color:#e8e8e8;-webkit-text-stroke:0.2px #e8e8e8;line-height:12px">中</div>
<svg class="a" style="left:650px;top:544px" width="9" height="9" viewBox="0 0 9 9"><path d="M2 0.8a4.2 4.2 0 1 1-1.6 6.9A3.8 3.8 0 0 0 2 0.8z" fill="#fff"/></svg>
<svg class="a" style="left:662px;top:544px" width="9" height="10" viewBox="0 0 9 10"><circle cx="2" cy="2" r="1.2" fill="none" stroke="#ddd" stroke-width="0.8"/><path d="M7 6.5v1.5l-0.8 1.5" stroke="#fff" stroke-width="1"/></svg>
<svg class="a" style="left:674px;top:545px" width="11" height="8" viewBox="0 0 11 8"><rect x="0.5" y="0.5" width="10" height="7" fill="#888"/><path d="M2 2h1M4 2h1M6 2h1M8 2h1M2 4h1M4 4h1M6 4h1M8 4h1M3 6h5" stroke="#333" stroke-width="0.8"/></svg>
<svg class="a" style="left:688px;top:544px" width="9" height="10" viewBox="0 0 9 10"><circle cx="4.5" cy="2.8" r="2.3" fill="#888"/><path d="M0.5 9.5q0-4 4-4t4 4z" fill="#888"/></svg>
<svg class="a" style="left:700px;top:544px" width="10" height="10" viewBox="0 0 10 10"><path d="M0.5 8.3L4.6 4.2A2.8 2.8 0 0 1 8.4 0.5L6.7 2.2 7.8 3.3 9.5 1.6A2.8 2.8 0 0 1 5.8 5.4L1.7 9.5z" fill="#fff"/></svg>
<svg class="a" style="left:712px;top:544px" width="10" height="10" viewBox="0 0 10 10"><path d="M4 0.8H0.8v8.4h8.4V6" fill="none" stroke="#fff" stroke-width="0.9"/><path d="M3.5 6.5l5-5M5.5 1h3.5v3.5" fill="none" stroke="#fff" stroke-width="1"/></svg>
<svg class="a" style="left:737px;top:543px" width="8" height="13" viewBox="0 0 8 13"><path d="M2 0.5v3M6 0.5v3" stroke="#fff" stroke-width="1.1"/><path d="M0.5 3.5h7v3a3.5 3.5 0 0 1-7 0z" fill="#fff"/><path d="M4 9v4" stroke="#fff" stroke-width="1.5"/></svg>
<div class="a" style="left:745px;top:543.5px;width:21.5px;height:12px;background:#2a9a44;border:1.3px solid #eee"></div>
<div class="a" style="left:766.5px;top:547px;width:1.8px;height:5px;background:#eee;"></div>
<div class="a" style="left:747.5px;top:544.5px;font-size:7.5px;line-height:10px;color:#fff;-webkit-text-stroke:0.2px #fff;font-family:'Liberation Sans';line-height:10px">100%</div>
<svg class="a" style="left:779px;top:543px" width="13" height="13" viewBox="0 0 13 13"><circle cx="8.5" cy="3" r="2" fill="none" stroke="#ddd" stroke-width="1"/><path d="M5.5 9q0-3.5 3-3.5t3 3.5" fill="none" stroke="#ddd" stroke-width="1"/><circle cx="4" cy="6.2" r="2" fill="none" stroke="#ddd" stroke-width="1"/><path d="M1 12.5q0-3.5 3-3.5t3 3.5" fill="none" stroke="#ddd" stroke-width="1"/></svg>
<svg class="a" style="left:804px;top:546px" width="9" height="6" viewBox="0 0 9 6"><path d="M0.5 5.3l4-4 4 4" fill="none" stroke="#ddd" stroke-width="1.1"/></svg>
<svg class="a" style="left:820px;top:543px" width="10" height="13" viewBox="0 0 10 13"><ellipse cx="5" cy="4" rx="3.3" ry="3.6" fill="#111"/><ellipse cx="5" cy="8.5" rx="4" ry="3.5" fill="#111"/><ellipse cx="5" cy="9" rx="2.5" ry="2.6" fill="#fff"/><path d="M1.5 7.5h7l-1 1.5h-5z" fill="#e01818"/><path d="M3.5 5.2h3l-1.5 1.2z" fill="#f4b400"/><path d="M1 12h3M6 12h3" stroke="#f4b400" stroke-width="1.2"/></svg>
<svg class="a" style="left:835px;top:545px" width="11" height="9" viewBox="0 0 11 9"><rect x="2.5" y="1.5" width="8" height="7" fill="#ccc"/><path d="M0.5 0.5l2 2" stroke="#ccc"/><path d="M4 3.5h5M4 5.5h5" stroke="#777" stroke-width="0.6"/></svg>
<svg class="a" style="left:850px;top:544px" width="12" height="11" viewBox="0 0 12 11"><path d="M0.5 3.5h2.5l3-3v10l-3-3H0.5z" fill="none" stroke="#ddd" stroke-width="0.9"/><path d="M7.5 3.5q1 2 0 4M9.3 2q2 3.5 0 7" fill="none" stroke="#ddd" stroke-width="0.9"/></svg>
<svg class="a" style="left:867px;top:544px" width="10" height="11" viewBox="0 0 10 11"><path d="M0.5 10.5a10 10 0 0 1 9-9M2.8 10.5a7.3 7.3 0 0 1 6.7-6.5M5 10.5a5 5 0 0 1 4.5-4.3M7.2 10.5a2.4 2.4 0 0 1 2.3-2" fill="none" stroke="#bbb" stroke-width="0.9"/></svg>
<div class="a" style="left:882px;top:543px;font-size:9px;line-height:10px;color:#e8e8e8;-webkit-text-stroke:0.2px #e8e8e8;line-height:12px">中</div>
<svg class="a" style="left:900px;top:544px" width="11" height="11" viewBox="0 0 11 11"><rect x="0.5" y="0.5" width="10" height="10" rx="2" fill="#e8512a" transform="rotate(-6 5 5)"/><text x="2.3" y="9" font-size="9" font-weight="bold" font-family="Liberation Sans" fill="#fff">S</text></svg>
<div class="a" style="left:931px;top:539.5px;font-size:8.5px;line-height:10px;color:#fff;-webkit-text-stroke:0.2px #fff;font-family:'Liberation Sans';line-height:10px">22:52</div>
<div class="a" style="left:922px;top:551.5px;font-size:8.5px;line-height:10px;color:#fff;-webkit-text-stroke:0.2px #fff;font-family:'Liberation Sans';line-height:10px">2019/4/27</div>
<svg class="a" style="left:972px;top:544px" width="13" height="13" viewBox="0 0 13 13"><path d="M0.8 0.8h11v8h-4.5l-2.3 2.5v-2.5h-4.2z" fill="#fff"/><path d="M3 3h7M3 5h7M3 7h5" stroke="#555" stroke-width="0.7"/></svg>
<!--/BOT-->
<!--WM--><svg class="a" style="left:750px;top:440px" width="210" height="110" viewBox="750 440 210 110">
<g fill="none" stroke="#9c9c9c" stroke-opacity="0.35" stroke-width="3.4" stroke-linejoin="round"><text x="767" y="511" font-family="Liberation Sans" font-weight="bold" font-size="39" textLength="61" lengthAdjust="spacingAndGlyphs">Bai</text>
<ellipse cx="836" cy="478" rx="6.5" ry="9" transform="rotate(-20 836 478)"/>
<ellipse cx="849" cy="466" rx="6.5" ry="9.5" transform="rotate(-5 849 466)"/>
<ellipse cx="864" cy="467" rx="6.5" ry="9.5" transform="rotate(8 864 467)"/>
<ellipse cx="874.5" cy="482" rx="6.5" ry="9" transform="rotate(22 874.5 482)"/>
<path d="M856 481 C847 481 841 493 836 499 C829 506 832 513.5 842 513.5 C848 513.5 852 512 856 512 C860 512 864 513.5 870 513.5 C880 513.5 883 506 876 499 C871 493 865 481 856 481z"/>
<text x="883" y="509" font-size="29" font-weight="bold" font-family="Liberation Sans" textLength="60" lengthAdjust="spacingAndGlyphs">经验</text></g>
<g fill="#f8f8f8" stroke="#f8f8f8" stroke-width="1.8" stroke-linejoin="round"><text x="767" y="511" font-family="Liberation Sans" font-weight="bold" font-size="39" textLength="61" lengthAdjust="spacingAndGlyphs">Bai</text>
<ellipse cx="836" cy="478" rx="6.5" ry="9" transform="rotate(-20 836 478)"/>
<ellipse cx="849" cy="466" rx="6.5" ry="9.5" transform="rotate(-5 849 466)"/>
<ellipse cx="864" cy="467" rx="6.5" ry="9.5" transform="rotate(8 864 467)"/>
<ellipse cx="874.5" cy="482" rx="6.5" ry="9" transform="rotate(22 874.5 482)"/>
<path d="M856 481 C847 481 841 493 836 499 C829 506 832 513.5 842 513.5 C848 513.5 852 512 856 512 C860 512 864 513.5 870 513.5 C880 513.5 883 506 876 499 C871 493 865 481 856 481z"/>
<text x="883" y="509" font-size="29" font-weight="bold" font-family="Liberation Sans" textLength="60" lengthAdjust="spacingAndGlyphs">经验</text></g>
<text x="840" y="508" font-family="Liberation Sans" font-size="23" fill="#e6e6e6" stroke="#8c8c8c" stroke-opacity="0.75" stroke-width="0.9" textLength="30" lengthAdjust="spacingAndGlyphs">du</text>
<g fill="none" stroke="#888" stroke-opacity="0.3" stroke-width="2.6" stroke-linejoin="round"><text x="769" y="534" font-family="Liberation Sans" font-size="24" textLength="177" lengthAdjust="spacingAndGlyphs">jingyan.baidu.com</text></g>
<g fill="#fafafa" fill-opacity="0.8" stroke="#fafafa" stroke-opacity="0.8" stroke-width="1" stroke-linejoin="round"><text x="769" y="534" font-family="Liberation Sans" font-size="24" textLength="177" lengthAdjust="spacingAndGlyphs">jingyan.baidu.com</text></g>
</svg>
<!--/WM-->
</body></html>
